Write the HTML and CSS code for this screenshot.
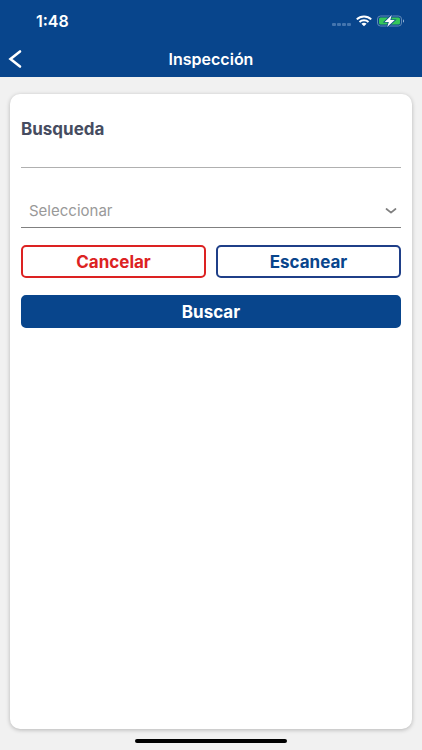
FILE: index.html
```html
<!DOCTYPE html>
<html lang="es">
<head>
  <meta charset="UTF-8" />
  <meta name="viewport" content="width=device-width, initial-scale=1.0" />
  <title>Inspección</title>
  <link rel="stylesheet" href="styles.css">
</head>
<body>
  <header class="header">
    <div class="status-bar">
      <span class="time">1:48</span>
      <div class="status-icons">
        <svg class="signal" width="20" height="12" viewBox="0 0 20 12" aria-hidden="true">
          <g fill="#4475ae">
            <rect x="1" y="6" width="4" height="3" rx="1" />
            <rect x="6" y="6" width="4" height="3" rx="1" />
            <rect x="11" y="6" width="4" height="3" rx="1" />
            <rect x="16" y="6" width="4" height="3" rx="1" />
          </g>
        </svg>
        <svg class="wifi" width="16" height="12" viewBox="0 0 16 12" aria-hidden="true">
          <g fill="none" stroke="#fff" stroke-width="2">
            <path d="M0.8 4.4C4.8 0.4 11.2 0.4 15.2 4.4" />
            <path d="M3.5 7C6 4.7 10 4.7 12.5 7" />
          </g>
          <path d="M5.4 8.8C6.9 7.5 9.1 7.5 10.6 8.8L8 11.2Z" fill="#fff" />
        </svg>
        <svg class="battery" width="28" height="14" viewBox="0 0 28 14" aria-hidden="true">
          <rect x="0.5" y="2" width="24" height="10" rx="3" fill="none" stroke="#6089b8" />
          <rect x="2" y="3.5" width="21" height="7" rx="1.5" fill="#35c759" />
          <path d="M26 5.3C27.3 5.8 27.3 8.2 26 8.7Z" fill="#a3bbd8" />
          <path d="M14.8 1L7.6 7.9H11.8L10.2 13L17.8 6.1H13.3Z" fill="#fff" stroke="#08458c" stroke-width="1.4" paint-order="stroke" />
        </svg>
      </div>
    </div>
    <nav class="nav-bar">
      <a href="#" class="back" aria-label="Volver">
        <svg width="14" height="20" viewBox="0 0 14 20" aria-hidden="true">
          <path d="M12 2.5L2.5 10L12 17.5" fill="none" stroke="#fff" stroke-width="2.6" stroke-linecap="round" stroke-linejoin="miter" />
        </svg>
      </a>
      <h1 class="title">Inspección</h1>
    </nav>
  </header>

  <main class="content">
    <form class="card">
      <label class="label" for="search">Busqueda</label>
      <input class="search" id="search" type="text" />

      <div class="select-wrap">
        <select class="select" aria-label="Seleccionar">
          <option>Seleccionar</option>
        </select>
        <svg class="chevron" width="12" height="8" viewBox="0 0 12 8" aria-hidden="true">
          <path d="M1.5 2L6 5.7L10.5 2" fill="none" stroke="#808080" stroke-width="1.7" stroke-linecap="round" stroke-linejoin="round" />
        </svg>
      </div>

      <div class="actions">
        <button type="reset" class="btn btn-cancel">Cancelar</button>
        <button type="button" class="btn btn-scan">Escanear</button>
      </div>
      <button type="submit" class="btn btn-search">Buscar</button>
    </form>
  </main>

  <footer class="home">
    <div class="home-indicator"></div>
  </footer>
</body>
</html>
```

FILE: styles.css
```css
:root {
  --primary: #08458c;
  --danger: #dc2222;
  --background: #f1f1f1;
  --text: #464c60;
  --muted: #999999;
}

* {
  box-sizing: border-box;
  margin: 0;
  padding: 0;
}

body {
  display: flex;
  flex-direction: column;
  min-height: 100vh;
  font-family: Inter, "Liberation Sans", sans-serif;
  background-color: var(--background);
  color: var(--text);
}

/* Header */
.header {
  background-color: var(--primary);
  color: #ffffff;
}

.status-bar {
  display: flex;
  justify-content: space-between;
  align-items: center;
  height: 41px;
  padding: 0 17px 0 36px;
}

.time {
  font-size: 16px;
  font-weight: 600;
}

.status-icons {
  display: flex;
  align-items: center;
  gap: 5px;
}

.signal {
  margin-top: 4px;
}

.nav-bar {
  display: grid;
  grid-template-columns: 40px 1fr 40px;
  align-items: center;
  height: 36px;
}

.back {
  display: flex;
  padding-left: 8px;
}

.title {
  font-size: 16px;
  font-weight: 600;
  text-align: center;
}

/* Card */
.content {
  display: flex;
  flex: 1;
  padding: 17px 10px 0;
}

.card {
  display: flex;
  flex-direction: column;
  flex: 1;
  padding: 24px 11px;
  background-color: #ffffff;
  border-radius: 10px;
  box-shadow: 0 1px 4px rgba(0, 0, 0, 0.25);
}

.label {
  font-size: 17px;
  line-height: 22px;
  font-weight: 700;
}

.search {
  width: 100%;
  height: 28px;
  border: none;
  border-bottom: 1px solid #b0b0b0;
  background: none;
  font: inherit;
  outline: none;
}

.select-wrap {
  position: relative;
  margin-top: 26px;
}

.select {
  display: block;
  width: 100%;
  height: 34px;
  padding: 0 24px 0 8px;
  border: none;
  border-bottom: 1px solid #808080;
  border-radius: 0;
  appearance: none;
  background: none;
  font: inherit;
  font-size: 15px;
  color: var(--muted);
}

.chevron {
  position: absolute;
  top: 13px;
  right: 4px;
  pointer-events: none;
}

/* Buttons */
.actions {
  display: flex;
  gap: 10px;
  margin: 17px 0;
}

.btn {
  height: 33px;
  border: 2px solid var(--primary);
  border-radius: 5px;
  background-color: #ffffff;
  font: inherit;
  font-size: 17px;
  font-weight: 700;
  color: var(--primary);
}

.actions .btn {
  flex: 1;
}

.btn-cancel {
  border-color: var(--danger);
  color: var(--danger);
}

.btn-scan {
  border-color: #1f3f88;
}

.btn-search {
  background-color: var(--primary);
  color: #ffffff;
}

/* Home indicator */
.home {
  display: flex;
  justify-content: center;
  padding: 10px 0 7px;
}

.home-indicator {
  width: 36%;
  height: 4px;
  border-radius: 2px;
  background-color: #000000;
}
```
